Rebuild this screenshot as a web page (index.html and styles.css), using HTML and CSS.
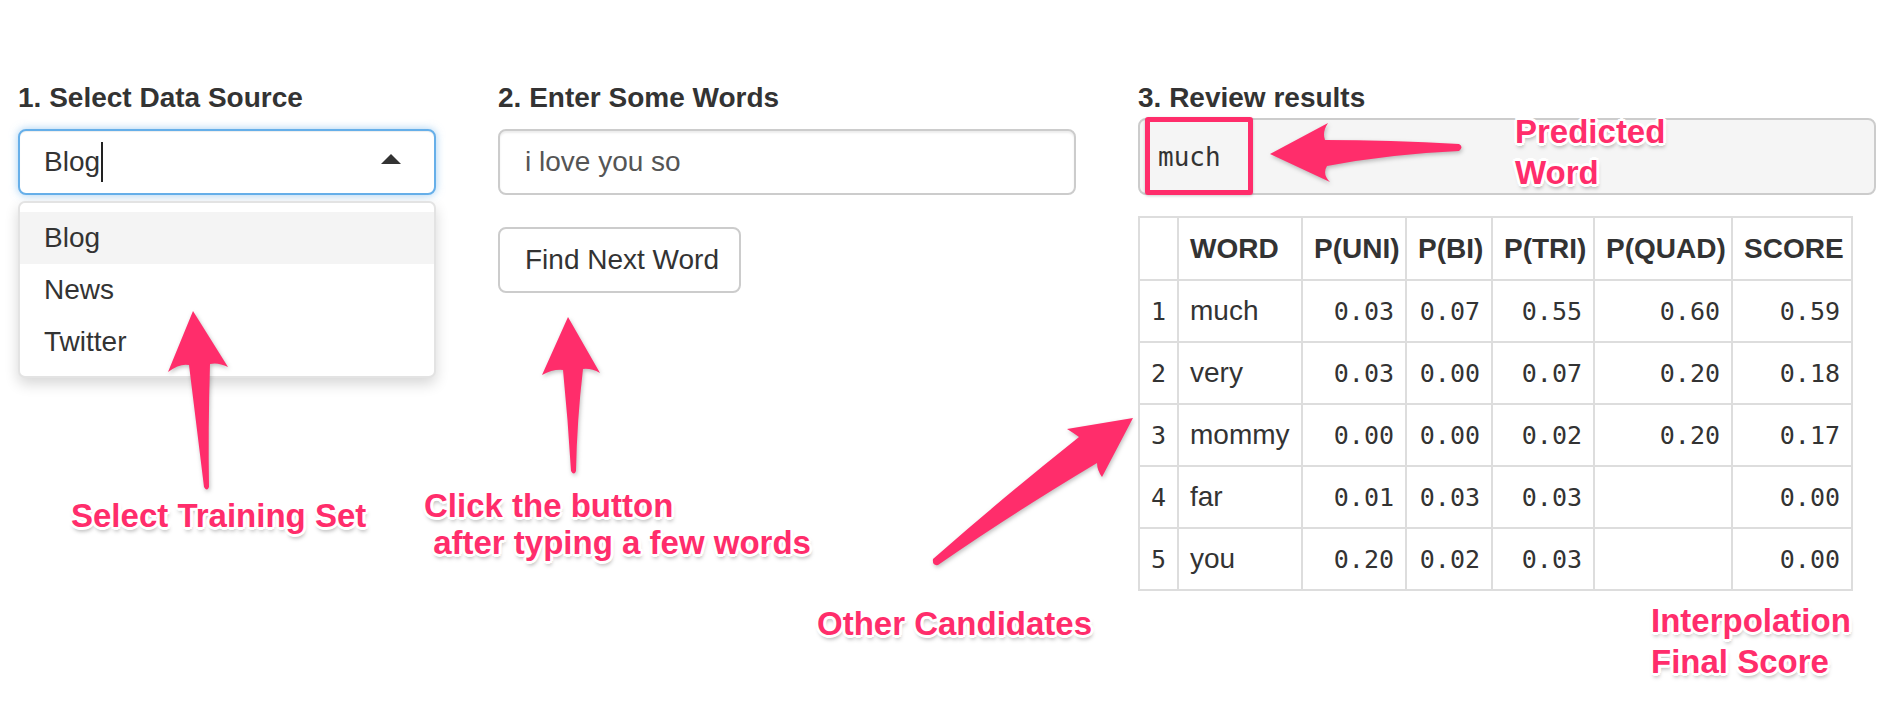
FILE: index.html
```html
<!DOCTYPE html>
<html lang="en">
<head>
<meta charset="utf-8">
<title>Next Word Prediction</title>
<link rel="stylesheet" href="styles.css">
</head>
<body>
<div class="page">
  <div class="columns">
    <section class="col col-source">
      <h4 class="heading">1. Select Data Source</h4>
      <div class="select">
        <span class="select-value">Blog</span><span class="cursor"></span><span class="caret"></span>
      </div>
      <ul class="menu">
        <li class="active">Blog</li>
        <li>News</li>
        <li>Twitter</li>
      </ul>
    </section>
    <section class="col col-words">
      <h4 class="heading">2. Enter Some Words</h4>
      <div class="text-input">i love you so</div>
      <div class="button">Find Next Word</div>
    </section>
    <section class="col col-results">
      <h4 class="heading">3. Review results</h4>
      <div class="well">much</div>
      <table class="results">
        <colgroup>
          <col class="w-idx"><col class="w-word"><col class="w-uni"><col class="w-bi"><col class="w-tri"><col class="w-quad"><col class="w-score">
        </colgroup>
        <thead>
          <tr><th></th><th>WORD</th><th>P(UNI)</th><th>P(BI)</th><th>P(TRI)</th><th>P(QUAD)</th><th>SCORE</th></tr>
        </thead>
        <tbody>
          <tr><td class="mono">1</td><td>much</td><td class="mono">0.03</td><td class="mono">0.07</td><td class="mono">0.55</td><td class="mono">0.60</td><td class="mono">0.59</td></tr>
          <tr><td class="mono">2</td><td>very</td><td class="mono">0.03</td><td class="mono">0.00</td><td class="mono">0.07</td><td class="mono">0.20</td><td class="mono">0.18</td></tr>
          <tr><td class="mono">3</td><td>mommy</td><td class="mono">0.00</td><td class="mono">0.00</td><td class="mono">0.02</td><td class="mono">0.20</td><td class="mono">0.17</td></tr>
          <tr><td class="mono">4</td><td>far</td><td class="mono">0.01</td><td class="mono">0.03</td><td class="mono">0.03</td><td class="mono"></td><td class="mono">0.00</td></tr>
          <tr><td class="mono">5</td><td>you</td><td class="mono">0.20</td><td class="mono">0.02</td><td class="mono">0.03</td><td class="mono"></td><td class="mono">0.00</td></tr>
        </tbody>
      </table>
    </section>
  </div>

  <div class="mark-box"></div>

  <svg class="arrows" width="1894" height="706" viewBox="0 0 1894 706" xmlns="http://www.w3.org/2000/svg">
    <path d="M193,311 L228,367 Q218,362 210,364 Q208,430 209,487 Q207,492 204,487 Q197,430 189,365 Q180,363 168,372 Z"/>
    <path d="M568,317 L600,373 Q591,368 583,369 Q577,420 576,471 Q574,476 571,471 Q568,420 563,370 Q553,369 542,375 Z"/>
    <path d="M1270,154 L1328,123 Q1322,132 1325,140 Q1390,140 1459,144 Q1464,147 1459,151 Q1390,154 1327,166 Q1322,174 1330,182 Z"/>
    <path d="M1133,418 L1102,477 Q1097,470 1097,463 Q1010,515 938,565 Q932,566 933,559 Q1000,500 1079,437 Q1072,432 1067,429 Z"/>
  </svg>

  <div class="note note-predicted">Predicted<br>Word</div>
  <div class="note note-select">Select Training Set</div>
  <div class="note note-click">Click the button
 after typing a few words</div>
  <div class="note note-other">Other Candidates</div>
  <div class="note note-final">Interpolation<br>Final Score</div>
</div>
</body>
</html>
```

FILE: styles.css
```css
body {
  margin: 0;
  background: #ffffff;
  font-family: "Liberation Sans", Arial, Helvetica, sans-serif;
  color: #333333;
}

.page {
  position: relative;
  width: 1894px;
  height: 706px;
  box-sizing: border-box;
  padding: 82px 0 0 18px;
  overflow: hidden;
}

.columns {
  display: grid;
  grid-template-columns: 418px 578px 738px;
  column-gap: 62px;
  align-items: start;
}

.heading {
  margin: 0 0 15px;
  font-size: 28px;
  line-height: 32px;
  font-weight: bold;
  color: #333333;
}

.col-results .heading {
  margin-bottom: 4px;
}

/* ---------- select ---------- */
.select {
  height: 66px;
  box-sizing: border-box;
  border: 2px solid #66afe9;
  border-radius: 8px;
  box-shadow: inset 0 1px 1px rgba(0, 0, 0, 0.075), 0 0 8px rgba(102, 175, 233, 0.6);
  display: flex;
  align-items: center;
  padding: 0 33px 0 24px;
  font-size: 28px;
  background: #fff;
}

.cursor {
  width: 2px;
  height: 40px;
  background: #222;
  margin-left: 1px;
}

.caret {
  margin-left: auto;
  width: 0;
  height: 0;
  border-left: 10px solid transparent;
  border-right: 10px solid transparent;
  border-bottom: 10px solid #333;
  margin-bottom: 6px;
}

.menu {
  list-style: none;
  margin: 6px 0 0;
  padding: 9px 0 8px;
  border: 2px solid #e3e3e3;
  border-radius: 7px;
  box-shadow: 0 6px 14px rgba(0, 0, 0, 0.16);
  font-size: 28px;
  background: #fff;
}

.menu li {
  height: 52px;
  line-height: 52px;
  padding-left: 24px;
}

.menu .active {
  background: #f4f4f4;
}

/* ---------- words ---------- */
.text-input {
  height: 66px;
  box-sizing: border-box;
  border: 2px solid #cccccc;
  border-radius: 8px;
  box-shadow: inset 0 2px 2px rgba(0, 0, 0, 0.075);
  padding: 0 25px;
  display: flex;
  align-items: center;
  font-size: 28px;
  color: #555555;
}

.button {
  margin-top: 32px;
  width: 243px;
  height: 66px;
  box-sizing: border-box;
  border: 2px solid #cccccc;
  border-radius: 8px;
  padding-left: 25px;
  display: flex;
  align-items: center;
  font-size: 28px;
  color: #333333;
  background: #fff;
  white-space: nowrap;
}

/* ---------- results ---------- */
.well {
  height: 77px;
  box-sizing: border-box;
  border: 2px solid #cccccc;
  border-radius: 8px;
  background: #f5f5f5;
  display: flex;
  align-items: center;
  padding-left: 18px;
  font-family: "DejaVu Sans Mono", "Liberation Mono", monospace;
  font-size: 26px;
  color: #333;
  margin-bottom: 21px;
}

.results {
  border-collapse: collapse;
  table-layout: fixed;
  width: 713px;
  font-size: 28px;
  color: #333;
}

.w-idx { width: 39px; }
.w-word { width: 124px; }
.w-uni { width: 104px; }
.w-bi { width: 86px; }
.w-tri { width: 102px; }
.w-quad { width: 138px; }
.w-score { width: 120px; }

.results th,
.results td {
  border: 2px solid #dddddd;
  padding: 0 11px;
  white-space: nowrap;
  overflow: hidden;
}

.results th {
  height: 61px;
  text-align: left;
  font-weight: bold;
}

.results td {
  height: 60px;
  text-align: left;
}

.results td.mono {
  text-align: right;
  font-family: "DejaVu Sans Mono", "Liberation Mono", monospace;
  font-size: 25px;
}

/* ---------- annotations ---------- */
.mark-box {
  position: absolute;
  left: 1145px;
  top: 117px;
  width: 108px;
  height: 78px;
  box-sizing: border-box;
  border: 5px solid #ff2d6b;
  border-radius: 3px;
  box-shadow: 0 1px 3px rgba(0, 0, 0, 0.2);
}

.arrows {
  position: absolute;
  left: 0;
  top: 0;
  pointer-events: none;
  fill: #ff2d6b;
  filter: drop-shadow(1px 2px 2px rgba(0, 0, 0, 0.25));
}

.note {
  position: absolute;
  font-family: "Liberation Sans", Arial, Helvetica, sans-serif;
  font-weight: bold;
  font-size: 33px;
  line-height: 41px;
  color: #ff2d6b;
  white-space: pre;
  text-shadow:
    -3px 0 0 #fff, 3px 0 0 #fff, 0 -3px 0 #fff, 0 3px 0 #fff,
    -2px -2px 0 #fff, 2px -2px 0 #fff, -2px 2px 0 #fff, 2px 2px 0 #fff,
    1px 4px 4px rgba(0, 0, 0, 0.35);
}

.note-predicted { left: 1515px; top: 111px; }
.note-select { left: 71px; top: 495px; }
.note-click { left: 424px; top: 487px; line-height: 37px; }
.note-other { left: 817px; top: 603px; }
.note-final { left: 1651px; top: 600px; }
```
